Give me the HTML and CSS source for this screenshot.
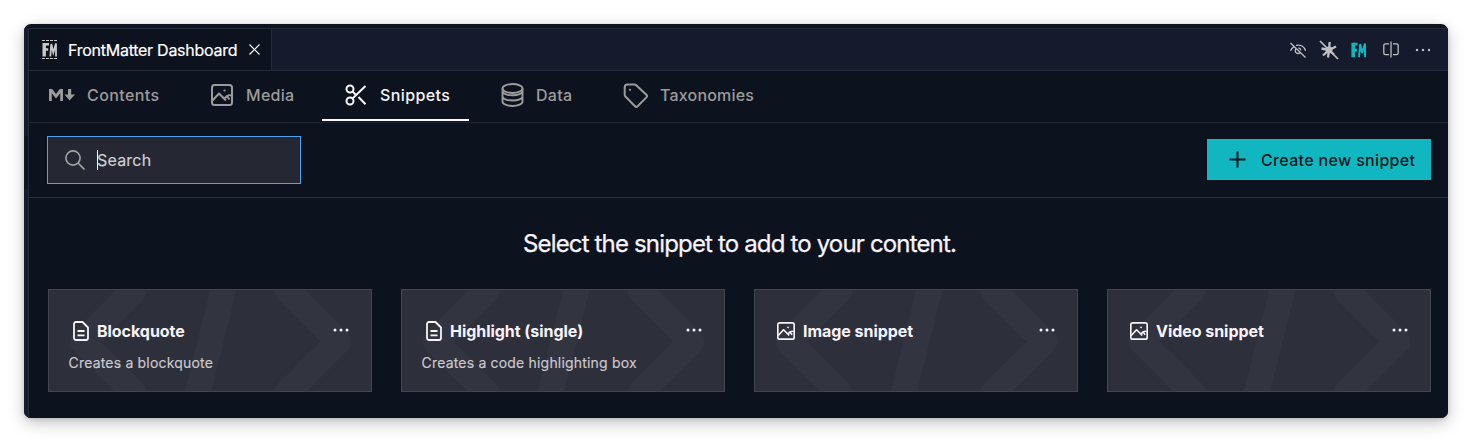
FILE: index.html
```html
<!DOCTYPE html>
<html lang="en">
<head>
<meta charset="utf-8">
<title>FrontMatter Dashboard</title>
<link rel="stylesheet" href="styles.css">
</head>
<body>
<svg class="defs" width="0" height="0">
  <symbol id="image" viewBox="0 0 22 22" fill="none" stroke="currentColor" stroke-width="2" stroke-linejoin="round"><rect x="1" y="1" width="20" height="20" rx="2.500"/><path d="M1.500 16.500l6.500-7 7 7M13.500 14.500l2.500-2.500 1 1.500 1.500 2"/><path d="M16.500 12.500c.5-1.800 2.500-1.800 4-.5" stroke-width="1.600"/><circle cx="13.500" cy="6.500" r="1.100" fill="currentColor" stroke="none"/></symbol>
  <symbol id="file" viewBox="0 0 16 20" fill="none" stroke="currentColor" stroke-width="1.800" stroke-linejoin="round"><path d="M3 1h6.500L15 6.500V17a2 2 0 0 1-2 2H3a2 2 0 0 1-2-2V3a2 2 0 0 1 2-2z"/><path d="M4.500 10h7M4.500 14.300h7"/></symbol>
  <symbol id="code" viewBox="0 0 24 24" fill="none" stroke="currentColor" stroke-width="2" stroke-linecap="round" stroke-linejoin="round"><path d="M10 20l4-16m4 4l4 4-4 4M6 16l-4-4 4-4"/></symbol>
  <symbol id="dots" viewBox="0 0 16 4" fill="currentColor"><circle cx="2" cy="2" r="1.500"/><circle cx="8" cy="2" r="1.500"/><circle cx="14" cy="2" r="1.500"/></symbol>
</svg>
<div class="window">
  <aside class="rail"><div class="rail-mark"></div></aside>
  <div class="main">
    <header class="tabbar">
      <div class="tab">
        <svg class="tab-logo" viewBox="0 0 16 20" fill="none" stroke="currentColor"><path d="M0 .5h15M0 18.500h15" stroke-dasharray="3 1"/><path d="M2.200 3v13.500" stroke-width="3.400"/><path d="M2 4.200h5M2 9.500h4.200" stroke-width="2.400"/><path d="M8.300 16.500l1-12.500 2 8.500 2.700-9v13" stroke-width="1.800"/></svg>
        <span class="tab-title">FrontMatter Dashboard</span>
        <svg class="tab-close" viewBox="0 0 11 11" stroke="currentColor" stroke-width="1.200"><path d="M.5 .5l10 10M10.500 .5l-10 10"/></svg>
      </div>
      <div class="actions">
        <svg width="18" height="18" viewBox="0 0 18 18" fill="none" stroke="currentColor" stroke-width="1.300"><path d="M1.500 2l15 14.500M1.500 9.800c.6-1.800 1.800-3.200 3.700-4.200M7 4.300c4.500-.8 8.300 1.300 9.500 5.500"/><path d="M7 7.800a2.800 2.800 0 1 0 4.200 3.700M9.500 7a2.800 2.800 0 0 1 2.400 2.400"/></svg>
        <svg class="act-star" width="20" height="20" viewBox="0 0 20 20" fill="none" stroke="currentColor"><path d="M1 1l18 18" stroke-width="1.700"/><path d="M10 10L10.700 2M10 10l7-3.500M10 10l5 4.500M10 10L9 17.500M10 10l-6 5.500M10 10L2.500 8.500" stroke-width="2.300"/><circle cx="10" cy="10" r="3.500" fill="currentColor" stroke="none"/></svg>
        <svg class="act-fm" width="16" height="16" viewBox="0 0 16 16" fill="none" stroke="currentColor"><path d="M2.200 .8v14.400" stroke-width="3.600"/><path d="M2 2.200h4.500M2 8.200h4" stroke-width="2.800"/><path d="M8 15.200L9.200 2l1.900 9L14 1.500v13.700" stroke-width="2"/></svg>
        <svg class="act-split" width="16" height="17" viewBox="0 0 16 17" fill="none" stroke="currentColor" stroke-width="1.300"><path d="M6 2.800H2.500a1.700 1.700 0 0 0-1.700 1.700v7.500a1.700 1.700 0 0 0 1.700 1.700H6M10 2.800h3.500a1.700 1.700 0 0 1 1.700 1.700v7.500a1.700 1.700 0 0 1-1.700 1.700H10M8 .5v16"/></svg>
        <svg class="act-more" width="16" height="4" viewBox="0 0 16 4" fill="currentColor"><circle cx="2" cy="2" r="1.200"/><circle cx="8" cy="2" r="1.200"/><circle cx="14" cy="2" r="1.200"/></svg>
      </div>
    </header>
    <nav class="nav">
      <a class="nav-item"><svg class="i-md" viewBox="0 0 26 12" fill="currentColor"><path d="M0 12V0h3.200L7 5l3.800-5H14v12h-2.800V4.300L7 9.500 2.800 4.300V12zM19 0h3.200v5.500H26L20.600 11.500 15.500 5.500H19z"/></svg><span class="l-contents">Contents</span></a>
      <a class="nav-item"><svg class="i-img"><use href="#image"/></svg><span class="l-media">Media</span></a>
      <a class="nav-item active"><svg class="i-cut" viewBox="0 0 22 22" fill="none" stroke="currentColor" stroke-width="2"><circle cx="5" cy="5" r="3.500"/><circle cx="5" cy="17" r="3.500"/><path d="M20.500 2L7.500 14.500M7.500 7.500l3.300 3.200M13.500 13l7 7.200"/></svg><span class="l-snippets">Snippets</span></a>
      <a class="nav-item"><svg class="i-db" viewBox="0 0 22 24" fill="none" stroke="currentColor" stroke-width="1.900"><ellipse cx="11" cy="5.500" rx="10" ry="4.500"/><path d="M1 5.500v13C1 21 5.500 23 11 23s10-2 10-4.500v-13M1 8c0 2.500 4.500 4.300 10 4.300S21 10.500 21 8M1 13.200c0 2.500 4.500 4.300 10 4.300s10-1.800 10-4.300"/></svg><span class="l-data">Data</span></a>
      <a class="nav-item"><svg class="i-tag" viewBox="0 0 26 25" fill="none" stroke="currentColor" stroke-width="2" stroke-linejoin="round"><path d="M4.500 1.500h7c.7 0 1.200.2 1.700.7l10.200 9.600c.8.800.8 1.800 0 2.600l-8.800 8.800c-.8.800-1.800.8-2.600 0L2.400 13.500c-.5-.5-.7-1-.7-1.700V4.500a3 3 0 0 1 2.800-3z"/><circle cx="7" cy="6.800" r="1.100" fill="currentColor" stroke="none"/></svg><span class="l-tax">Taxonomies</span></a>
    </nav>
    <div class="toolbar">
      <div class="search">
        <svg viewBox="0 0 20 20" fill="none" stroke="currentColor" stroke-width="1.700"><circle cx="8" cy="8" r="7.100"/><path d="M13 13l6.500 6.500"/></svg>
        <i class="caret"></i><span class="search-text">Search</span>
      </div>
      <div class="create"><svg viewBox="0 0 18 18" stroke="currentColor" stroke-width="2.200"><path d="M9 .5v17M.5 9h17"/></svg><span>Create new snippet</span></div>
    </div>
    <main class="content">
      <h1><span>Select the snippet to add to your content.</span></h1>
      <div class="cards">
        <article class="card"><svg class="bg"><use href="#code"/></svg><div class="head"><svg class="ic file"><use href="#file"/></svg><h2>Blockquote</h2><svg class="more"><use href="#dots"/></svg></div><p>Creates a blockquote</p></article>
        <article class="card"><svg class="bg"><use href="#code"/></svg><div class="head"><svg class="ic file"><use href="#file"/></svg><h2>Highlight (single)</h2><svg class="more"><use href="#dots"/></svg></div><p>Creates a code highlighting box</p></article>
        <article class="card"><svg class="bg"><use href="#code"/></svg><div class="head"><svg class="ic pic"><use href="#image"/></svg><h2>Image snippet</h2><svg class="more"><use href="#dots"/></svg></div></article>
        <article class="card"><svg class="bg"><use href="#code"/></svg><div class="head"><svg class="ic pic"><use href="#image"/></svg><h2>Video snippet</h2><svg class="more"><use href="#dots"/></svg></div></article>
      </div>
    </main>
  </div>
</div>
</body>
</html>
```
FILE: styles.css
```css
* { box-sizing: border-box; }
body { margin: 0; padding: 24px; height: 442px; overflow: hidden; background: #fff; font-family: Inter, "Liberation Sans", sans-serif; font-size: 16px; }
svg { display: block; flex: none; }
span, h1, h2, p { white-space: nowrap; margin: 0; }
.defs { position: absolute; }
.window { display: flex; width: 1424px; height: 394px; padding-top: 4px; border-radius: 7px; overflow: hidden; background: #0e131f; box-shadow: 0 5px 16px rgba(0,0,0,.23), 0 1px 4px rgba(0,0,0,.15); }
.rail { width: 4px; background: #161c2d; padding-top: 108px; }
.rail-mark { height: 53px; background: #10161b; }
.main { flex: 1; border-left: 1px solid #222b37; border-top: 1px solid #222b37; background: #0d131e; }
.tabbar { display: flex; justify-content: space-between; height: 42px; background: #151a2d; border-bottom: 1px solid #222b37; }
.tab { display: flex; align-items: center; width: 243px; padding-left: 13px; background: #0d131e; border-right: 1px solid #222b37; color: #fff; }
.tab-logo { width: 16px; height: 20px; color: #c9c9c9; }
.tab-title { width: 169px; margin: 1px 0 0 10px; letter-spacing: -.26px; -webkit-text-stroke: .2px; }
.tab-close { width: 11px; height: 11px; margin-left: 12px; }
.actions { display: flex; align-items: center; padding-right: 17px; color: #bfc0c2; }
.act-star { margin-left: 12px; }
.act-fm { margin-left: 12px; color: #0eb5bf; }
.act-split { margin-left: 16px; }
.act-more { margin-left: 16px; }
.nav { display: flex; height: 52px; padding-left: 1px; border-bottom: 1px solid #20252f; color: #9b9b9b; font-weight: 500; }
.nav-item { display: flex; align-items: center; height: 50px; padding: 0 19px 2px; margin-right: 12px; }
.nav-item span { margin-left: 12px; letter-spacing: .3px; }
.nav-item.active { padding: 2px 19px 2px 23px; margin-left: -4px; color: #f8f5fa; border-bottom: 2px solid #fcf8fc; }
.i-md { width: 26px; height: 12px; }
.nav .l-contents { width: 74px; letter-spacing: .4px; }
.i-img { width: 22px; height: 22px; }
.nav .l-media { width: 49px; margin-left: 13px; }
.i-cut { width: 22px; height: 22px; }
.nav .l-snippets { width: 71px; margin-left: 13px; margin-right: -1px; letter-spacing: .4px; }
.i-db { width: 23px; height: 24px; margin-left: 1px; }
.l-data { width: 37px; }
.i-tag { width: 26px; height: 25px; }
.nav .l-tax { margin-left: 11px; letter-spacing: .2px; }
.toolbar { display: flex; justify-content: space-between; height: 75px; padding: 13px 17px 0 18px; border-bottom: 1px solid #2c323c; }
.search { display: flex; align-items: center; width: 254px; height: 48px; padding-left: 17px; background: #252833; border: 1px solid #4da3ed; color: #a1a1a1; }
.search svg { width: 20px; height: 20px; }
.caret { width: 1px; height: 20px; margin-left: 12px; background: #fff; }
.search-text { margin-left: -1px; letter-spacing: .2px; color: #d2cfd5; -webkit-text-stroke: .15px; }
.create { display: flex; align-items: center; width: 224px; height: 41px; margin-top: 3px; padding-left: 22px; background: #11b7c0; color: #0d1820; font-weight: 500; }
.create svg { width: 17px; height: 17px; }
.create span { margin-left: 15px; letter-spacing: .33px; }
.content { padding: 28px 17px 0 19px; }
h1 { height: 63px; font-size: 24px; line-height: 36px; font-weight: 400; text-align: center; letter-spacing: -.84px; color: #f8f3fa; -webkit-text-stroke: .25px; }
.cards { display: grid; grid-template-columns: repeat(4, 1fr); gap: 29px; }
.card { position: relative; height: 103px; padding: 30px 20px 0; overflow: hidden; border: 1px solid #42464f; background: #2d303b; color: #f8f3fa; }
.bg { position: absolute; left: 8px; top: -102px; width: 307px; height: 307px; color: #32353f; }
.head { position: relative; display: flex; align-items: center; height: 22px; }
.ic { margin-left: 4px; }
.file { width: 16px; height: 20px; margin-right: 8px; }
.pic { width: 18px; height: 18px; margin-left: 2px; margin-right: 8px; }
h2 { font-size: 16px; font-weight: 700; line-height: 22px; letter-spacing: -.04px; }
.more { width: 16px; height: 4px; margin: -3px 2px 0 auto; }
.card p { position: relative; margin: 10px 0 0 -.5px; font-size: 14px; line-height: 22px; letter-spacing: .19px; color: #cdc9cf; -webkit-text-stroke: .15px; }
```
